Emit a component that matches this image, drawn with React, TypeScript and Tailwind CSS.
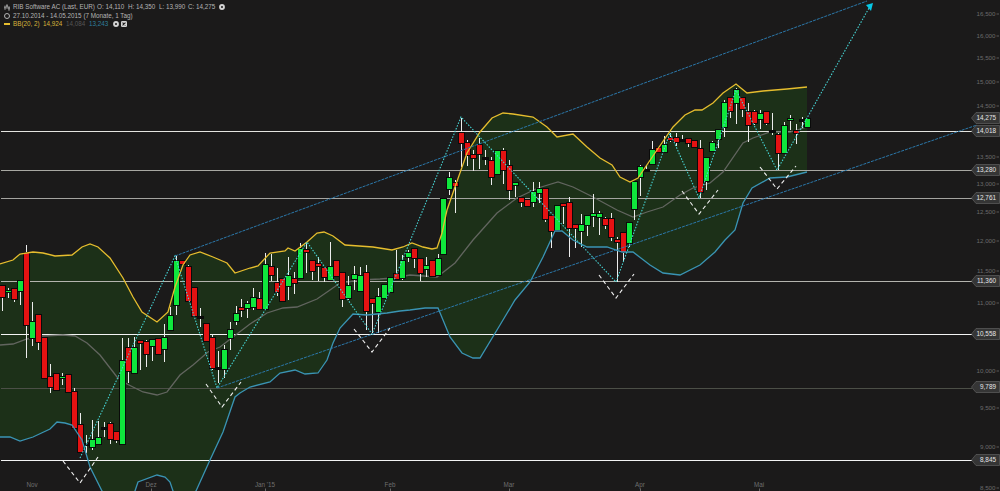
const R = "#e41212";
const G = "#0fe63c";
const K = "#0c0c0c";

// x, colour, body top, body bottom, wick top, wick bottom
const candles: [number, string, number, number, number, number][] = [
  [2, R, 286, 297, 286, 311], [8, G, 290.5, 291.5, 288, 298], [14, R, 289, 299, 288, 302], [20, G, 281, 291, 280, 305],
  [26, R, 253, 325, 245, 358], [32, G, 322, 338, 302, 346], [38, R, 315, 342, 314, 350], [44, R, 338, 378, 338, 378],
  [50, R, 377, 387, 364, 393], [56, R, 374, 390, 374, 390], [62, G, 377, 378, 373, 385], [68, R, 375, 392, 375, 392],
  [74, R, 392, 428, 388, 428], [80, R, 425, 452, 413, 452], [86, K, 443.5, 444.5, 435, 453], [92, G, 440, 447, 420, 450],
  [98, G, 438, 444, 421, 445], [104, K, 427.5, 428.5, 422, 437], [110, R, 424, 439, 422, 444], [116, R, 432, 440, 431, 443],
  [122, G, 361, 444, 338, 444], [128, R, 348, 371, 338, 383], [134, G, 348, 373, 337, 374], [140, R, 341, 343, 340, 370],
  [146, R, 342, 354, 340, 367], [152, G, 340, 346, 339, 361], [158, R, 339, 354, 339, 354], [164, G, 338, 349, 324, 362],
  [170, G, 316, 330, 307, 331], [176, G, 261, 305, 256, 315], [182, R, 261, 264, 260, 265], [188, R, 267, 301, 265, 301],
  [194, R, 288, 316, 288, 316], [200, K, 316.5, 317.5, 308, 327], [206, R, 324, 341, 324, 341], [212, R, 338, 368, 334, 370],
  [218, K, 367.5, 368.5, 351, 383], [224, G, 350, 369, 345, 378], [230, G, 330, 338, 322, 350], [236, G, 314, 321, 306, 325],
  [241, R, 307.5, 309, 299, 317], [247, G, 304, 308, 301, 318], [253, G, 298, 307, 288, 310], [259, R, 299, 309, 292, 309],
  [265, G, 265, 309, 253, 309], [271, R, 267, 275, 254, 281], [277, R, 283, 292, 268, 296], [282, R, 279, 301, 278, 301],
  [288, G, 276, 286, 257, 300], [294, R, 279, 283, 272, 294], [300, G, 249, 278, 243, 278], [306, R, 250, 252, 242, 273],
  [312, R, 261, 271, 261, 280], [318, R, 264, 266, 257, 281], [324, R, 268, 277, 268, 282], [330, G, 267, 280, 242, 281],
  [336, R, 261, 276, 261, 276], [342, R, 273, 299, 273, 307], [348, G, 286, 298, 276, 300], [354, G, 275, 279, 266, 290],
  [360, G, 276, 291, 267, 292], [366, R, 273, 311, 265, 330], [372, R, 299, 303, 299, 333], [378, G, 297, 312, 288, 333],
  [384, G, 285, 298, 285, 298], [390, G, 278, 292, 277, 292], [396, R, 274, 279, 250, 280], [402, G, 261, 278, 255, 280],
  [408, G, 253, 257, 250, 262], [414, R, 249, 258, 249, 268], [420, R, 259, 273, 259, 281], [426, G, 266, 269, 257, 277],
  [432, R, 261, 276, 260, 277], [438, G, 259, 275, 254, 276], [443, G, 199, 254, 199, 254], [449, G, 178, 189, 172, 195],
  [455, R, 183, 186, 180, 213], [461, R, 133, 143, 118, 167], [467, R, 143, 155, 140, 166], [473, R, 155, 158, 150, 171],
  [479, R, 145, 154, 138, 169], [485, K, 157.5, 158.5, 150, 165], [491, R, 161, 177, 157, 185], [497, G, 151, 174, 151, 174],
  [503, R, 151, 170, 148, 184], [509, R, 166, 190, 160, 200], [515, G, 183, 185, 183, 197], [521, R, 198, 202, 197, 207],
  [527, R, 200, 206, 200, 206], [533, G, 192, 202, 182, 207], [539, G, 189, 193, 182, 203], [545, R, 189, 219, 189, 222],
  [551, R, 216, 231, 216, 248], [557, G, 206, 230, 206, 230], [563, R, 204, 206, 204, 224], [569, R, 203, 228, 197, 257],
  [575, R, 225, 228, 225, 248], [581, G, 225, 231, 214, 247], [587, G, 216, 225, 216, 236], [593, G, 213.5, 215, 194, 227],
  [599, G, 214, 217, 211, 235], [605, R, 219, 225, 217, 229], [611, R, 219, 237, 213, 241], [617, R, 239.5, 241, 237, 282],
  [623, R, 233, 252, 233, 261], [629, G, 223, 243, 223, 247], [634, G, 182, 209, 182, 220], [640, G, 167, 177, 165, 196],
  [646, K, 169.5, 170.5, 165, 170], [652, G, 150, 164, 141, 165], [658, R, 148, 152, 148, 152], [664, G, 145, 152, 136, 152],
  [670, R, 138, 140, 133, 142], [676, R, 138, 142, 133, 146], [682, K, 139.5, 140.5, 135, 141], [688, R, 139, 143, 139, 147],
  [694, R, 141, 147, 141, 147], [700, R, 149, 192, 140, 198], [706, G, 158, 181, 158, 190], [712, G, 143, 151, 141, 152],
  [718, G, 130, 139, 130, 148], [724, G, 103, 127, 100, 137], [730, R, 98, 111, 98, 118], [736, G, 90, 103, 88, 124],
  [742, R, 98, 109, 98, 117], [748, R, 112, 125, 103, 142], [754, R, 112, 123, 110, 125], [760, G, 114, 119, 110, 129],
  [766, R, 112, 123, 111, 125], [772, K, 130.5, 131.5, 113, 135], [778, R, 135, 153, 133, 170], [784, G, 126, 153, 122, 153],
  [790, G, 118.5, 119.5, 115, 130], [796, R, 131, 133, 124, 144], [802, K, 119.5, 120.5, 117, 128], [807, G, 119, 127, 119, 127],
];

const upper =
  "0,264 13,260 20,254 33,252 43,253 55,256 72,255 82,247 90,244 98,247 110,258 123,278 133,297 142,312 157,322 168,312 175,287 183,265 190,255 200,252 213,257 227,263 235,273 250,268 258,266 270,253 285,251 288,248 295,251 307,242 317,233 324,232 333,236 345,245 373,247 392,250 403,247 412,243 423,247 432,249 437,248 442,233 447,210 455,187 467,153 480,132 492,118 503,113 513,114 533,117 547,127 557,137 573,134 587,147 600,158 612,165 620,177 630,182 638,178 657,150 673,127 685,115 695,110 702,110 713,103 723,93 736,84 747,93 763,91 787,89 807,87";

const lower =
  "0,437 10,437 20,441 33,437 50,429 57,422 65,423 72,425 82,440 90,467 102,491 118,505 135,491 138,482 157,475 165,477 170,482 173,491 185,505 196,491 210,460 223,432 235,397 240,393 250,387 270,382 280,373 295,370 305,374 318,373 327,360 333,343 340,328 353,314 367,315 387,313 400,311 410,310 425,308 438,308 443,320 450,337 462,353 473,358 480,358 500,325 515,300 530,282 543,257 555,231 562,231 573,240 587,247 607,247 622,252 633,252 650,265 663,273 680,275 700,265 715,252 725,240 735,230 743,203 752,188 770,178 787,177 807,172";

const middle =
  "0,345 13,344 27,339 43,336 63,335 75,336 87,343 100,355 117,377 127,384 143,392 157,395 167,392 180,375 193,365 208,352 220,347 233,337 250,324 267,313 283,308 297,307 317,299 330,290 340,283 360,280 380,279 393,278 410,275 437,277 455,263 473,240 497,213 517,198 538,188 558,182 573,187 593,197 617,210 633,217 647,212 663,207 680,195 693,188 710,183 723,172 743,143 753,138 770,132 790,132 807,127";

const band = upper + " " + lower.split(" ").reverse().join(" ");

const hLines: [number, string][] = [
  [131.5, "#e4e4e0"],
  [170.5, "#a8a8a2"],
  [198.5, "#a4a4a0"],
  [281.5, "#b4b4ae"],
  [334.5, "#f4f4f4"],
  [388.5, "#4c4f47"],
  [460.5, "#f4f4f4"],
];

const axis: [string, number][] = [
  ["16,500", 14], ["16,000", 36], ["15,500", 58], ["15,000", 82], ["14,500", 106], ["13,500", 157], ["13,000", 184],
  ["12,500", 212], ["12,000", 241], ["11,500", 271], ["11,000", 303], ["10,000", 371], ["9,500", 408], ["9,000", 447], ["8,500", 488],
];

const tags: [string, number][] = [
  ["14,275", 118], ["14,018", 131], ["13,280", 170], ["12,761", 198], ["11,360", 281], ["10,558", 334], ["9,789", 387], ["8,845", 460],
];

const months: [string, number, boolean][] = [
  ["Nov", 32, false], ["Dez", 151, true], ["Jan '15", 265, true], ["Feb", 390, true], ["Mar", 509, true], ["Apr", 640, true], ["Mai", 759, true],
];

const vees = [
  "63,461 80,483 98,457",
  "206,384 222,407 241,382",
  "354,329 372,352 390,328",
  "599,275 616,298 634,274",
  "682,191 699,214 718,190",
  "760,167 777,189 796,166",
];

function Gear() {
  return (
    <svg width="6" height="6" viewBox="0 0 7 7" className="shrink-0">
      <circle cx="3.5" cy="3.5" r="3.4" fill="#d4d4d4" />
      <circle cx="3.5" cy="3.5" r="1.2" fill="#1b1a1a" />
    </svg>
  );
}

function Close() {
  return (
    <svg width="6" height="6" viewBox="0 0 7 7" className="shrink-0">
      <rect width="7" height="7" rx="1.5" fill="#d4d4d4" />
      <path d="M1.8 1.8 5.2 5.2M5.2 1.8 1.8 5.2" stroke="#1b1a1a" strokeWidth="1.2" />
    </svg>
  );
}

function CandleIcon() {
  return (
    <svg width="6" height="7" viewBox="0 0 6 7" className="shrink-0">
      <path d="M1 1.5V6M3 0V5M5 2V7" stroke="#b4b4b4" strokeWidth="0.7" />
      <path d="M0.4 2.5h1.2v2h-1.2zM2.4 1h1.2v2.5h-1.2zM4.4 3h1.2v2.5h-1.2z" fill="#b4b4b4" />
    </svg>
  );
}

export default function App() {
  return (
    <div className="relative h-[491px] w-[1000px] overflow-hidden bg-[#1b1a1a] font-['Liberation_Sans',Arial,sans-serif]">
      <svg width="1000" height="491" viewBox="0 0 1000 491" className="block">
        <polygon points={band} fill="#1c3018" />
        {hLines.map(([y, c]) => (
          <line key={y} x1="1" x2="972" y1={y} y2={y} stroke={c} strokeWidth="1" shapeRendering="crispEdges" />
        ))}
        <polyline points={middle} fill="none" stroke="#62655f" strokeWidth="1.3" />
        {candles.map(([x, c, t, b, wt, wb], i) => (
          <g key={i} shapeRendering="crispEdges">
            <line x1={x + 0.5} x2={x + 0.5} y1={wt} y2={wb} stroke="#ececec" strokeWidth="1" />
            <rect x={x - 3} y={Math.round(t) - 1} width="7" height={Math.max(Math.round(b - t), 1) + 2} fill="#0a0a0a" />
            <rect x={x - 2} y={Math.round(t)} width="5" height={Math.max(Math.round(b - t), 1)} fill={c} />
          </g>
        ))}
        <polyline points={upper} fill="none" stroke="#e6bd2e" strokeWidth="1.3" />
        <polyline points={lower} fill="none" stroke="#3a94b4" strokeWidth="1.3" />
        <line x1="175" y1="256" x2="867" y2="1" stroke="#2b78aa" strokeWidth="1" strokeDasharray="3 1" />
        <line x1="217" y1="388" x2="977" y2="125" stroke="#2b78aa" strokeWidth="1" strokeDasharray="3 1" />
        <polyline
          points="80,458 175,256 217,388 307,242 372,334 461,117 616,282 670,133 699,198 736,90 777,170 807,118 869,8"
          fill="none"
          stroke="#46d4d4"
          strokeWidth="1.1"
          strokeDasharray="1.5 1.5"
        />
        <polygon points="873,3 866,5 871,11" fill="#06c8e6" />
        {vees.map((p) => (
          <polyline key={p} points={p} fill="none" stroke="#f0f0f0" strokeWidth="1.1" strokeDasharray="4 3" />
        ))}
        {axis.map(([t, y]) => (
          <g key={t}>
            <text x="995.5" y={y + 2.2} textAnchor="end" fontSize="6.2" fill="#6a6a6a">
              {t}
            </text>
            <line x1="996.5" x2="999" y1={y} y2={y} stroke="#6a6a6a" strokeWidth="0.8" />
          </g>
        ))}
        {tags.map(([t, y]) => (
          <g key={t}>
            <polygon
              points={`971.5,${y} 976,${y - 5.5} 999.5,${y - 5.5} 999.5,${y + 5.5} 976,${y + 5.5}`}
              fill="#353535"
              stroke="#6a6a6a"
              strokeWidth="0.6"
            />
            <text x="996" y={y + 2.3} textAnchor="end" fontSize="6.4" fill="#e6e6e6">
              {t}
            </text>
          </g>
        ))}
        {months.map(([t, x, tick]) => (
          <g key={t}>
            <text x={x} y="486.5" textAnchor="middle" fontSize="6.3" fill="#6e6e6e">
              {t}
            </text>
            {tick && <line x1={x + 0.5} x2={x + 0.5} y1="488.5" y2="491" stroke="#7a7a7a" strokeWidth="0.8" />}
          </g>
        ))}
      </svg>

      <div className="absolute left-1 top-[3px] flex flex-col text-[6.3px] leading-[8.5px] text-[#b4b4b4]">
        <div className="flex items-center">
          <CandleIcon />
          <span className="ml-[3px] w-[84px]">RIB Software AC (Last, EUR)</span>
          <span className="w-[31px]">O: 14,110</span>
          <span className="w-[31px]">H: 14,350</span>
          <span className="w-[29px]">L: 13,990</span>
          <span className="w-[31px]">C: 14,275</span>
          <Gear />
        </div>
        <div className="flex items-center">
          <span className="h-[6px] w-[6px] rounded-full border border-[#b4b4b4]" />
          <span className="ml-[3px]">27.10.2014 - 14.05.2015 (7 Monate, 1 Tag)</span>
        </div>
        <div className="flex items-center text-[#d8b53a]">
          <span className="h-[2px] w-[6px] bg-[#e6bd2e]" />
          <span className="ml-[3px] w-[30px]">BB(20, 2)</span>
          <span className="w-[23px]">14,924</span>
          <span className="w-[23px] text-[#565656]">14,084</span>
          <span className="w-[24px] text-[#2f7f9c]">13,243</span>
          <Gear />
          <span className="ml-[2px]"><Close /></span>
        </div>
      </div>
    </div>
  );
}
